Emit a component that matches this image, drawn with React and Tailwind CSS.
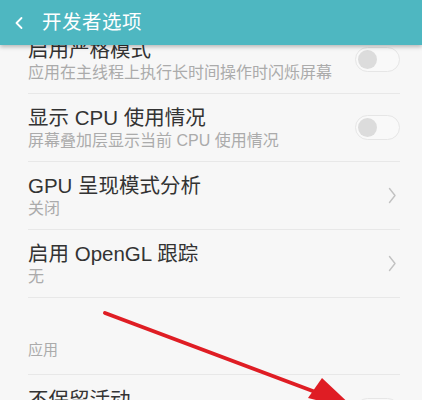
import { ChevronLeft } from "lucide-react";

const rows = [
  { title: "启用严格模式", sub: "应用在主线程上执行长时间操作时闪烁屏幕", kind: "toggle" },
  { title: "显示 CPU 使用情况", sub: "屏幕叠加层显示当前 CPU 使用情况", kind: "toggle" },
  { title: "GPU 呈现模式分析", sub: "关闭", kind: "link" },
  { title: "启用 OpenGL 跟踪", sub: "无", kind: "link" },
];

function Toggle() {
  return (
    <div className="w-[45px] h-[25px] rounded-full border border-[#e6e6e6] bg-[#f9f9f9] flex items-center px-[2px]">
      <div className="w-[19px] h-[19px] rounded-full bg-[#dcdcdc]" />
    </div>
  );
}

function Chevron() {
  return (
    <svg width="9" height="17" viewBox="0 0 9 17" className="mr-[3px]">
      <polyline points="1.5,1.5 7,8.5 1.5,15.5" fill="none" stroke="#c2c2c2" strokeWidth="1.4" strokeLinecap="round" strokeLinejoin="round" />
    </svg>
  );
}

function Row({ title, sub, kind }) {
  return (
    <div className="h-[68px] ml-[28px] mr-[22px] border-b border-[#e8e8e8] flex items-center">
      <div className="flex-1 flex flex-col">
        <span className="text-[20.5px] leading-[26px] text-[#333]">{title}</span>
        <span className="text-[16px] leading-[20px] text-[#ababab]">{sub}</span>
      </div>
      {kind === "toggle" ? <Toggle /> : <Chevron />}
    </div>
  );
}

export default function App() {
  return (
    <div
      className="relative w-[422px] h-[400px] overflow-hidden bg-[#f7f7f7] flex flex-col"
      style={{ fontFamily: '"Liberation Sans", "Noto Sans CJK SC", sans-serif' }}
    >
      <div className="relative z-10 h-[45px] shrink-0 bg-[#4eb7c1] flex items-center shadow-[0_2px_4px_rgba(0,0,0,0.25)]">
        <ChevronLeft className="w-[20px] h-[20px] text-white ml-[9px]" strokeWidth={2.2} />
        <span className="ml-[13px] text-[19.5px] text-white tracking-[0.5px]">开发者选项</span>
      </div>

      <div className="flex-1 overflow-hidden">
        <div className="-mt-[19px]">
          {rows.map((r) => (
            <Row key={r.title} {...r} />
          ))}

          <div className="h-[77px] ml-[28px] mr-[22px] border-b border-[#e8e8e8] flex items-end pb-[13px]">
            <span className="text-[15px] text-[#ababab]">应用</span>
          </div>

          <div className="h-[68px] ml-[28px] mr-[22px] flex items-start">
            <div className="flex-1 pt-[12px]">
              <span className="text-[20.5px] leading-[26px] text-[#333]">不保留活动</span>
            </div>
            <div className="pt-[23px]">
              <Toggle />
            </div>
          </div>
        </div>
      </div>

      <svg className="absolute inset-0 pointer-events-none z-20" width="422" height="400" viewBox="0 0 422 400">
        <line x1="105" y1="313" x2="326" y2="396" stroke="#df1d24" strokeWidth="4" strokeLinecap="round" />
        <polygon points="356,410 308,398 322,378" fill="#df1d24" />
      </svg>
    </div>
  );
}
